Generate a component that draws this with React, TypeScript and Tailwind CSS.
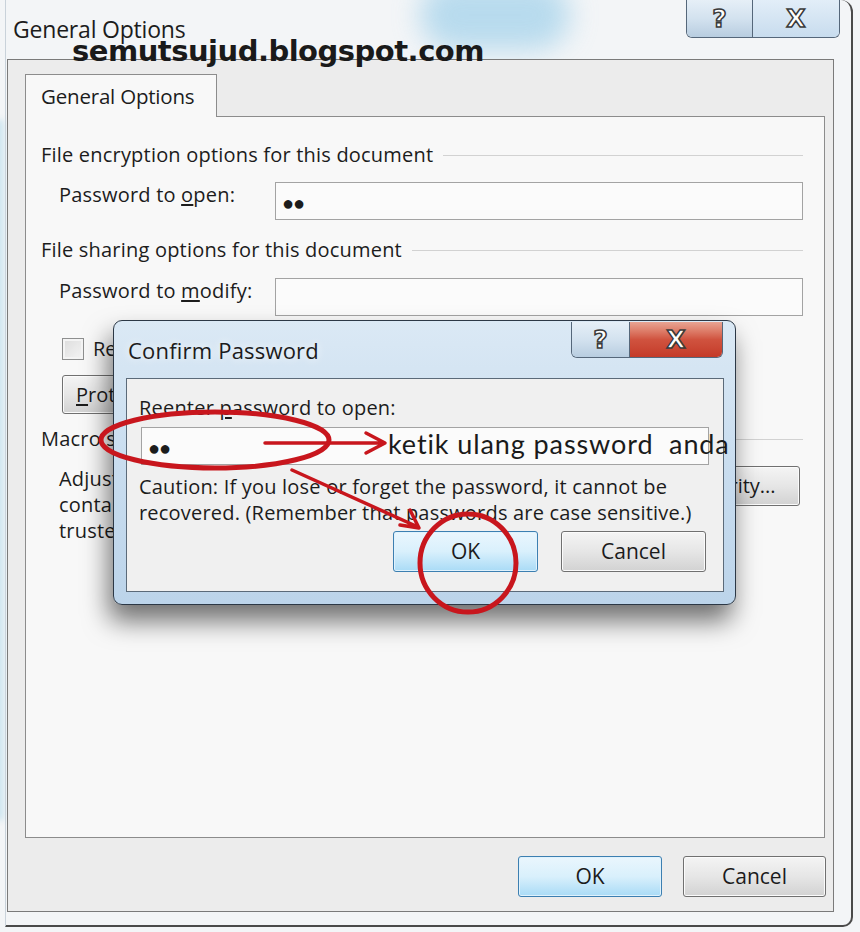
import React from 'react';

function WinButton({ label, primary, className = '' }: { label: React.ReactNode; primary?: boolean; className?: string }) {
  return (
    <div
      className={
        'flex items-center justify-center rounded-[3px] border text-[20px] leading-none text-[#1b1b1b] ' +
        (primary
          ? 'border-[#3c7fb1] bg-gradient-to-b from-[#eaf6fd] via-[#d9f0fc] to-[#a9dbf6] shadow-[inset_0_0_0_1px_#dff2fd]'
          : 'border-[#707070] bg-gradient-to-b from-[#f4f4f4] via-[#e6e6e6] to-[#d2d2d2] shadow-[inset_0_0_0_1px_#fbfbfb]') +
        ' ' +
        className
      }
    >
      {label}
    </div>
  );
}

function SectionHeading({ text, className = '' }: { text: string; className?: string }) {
  return (
    <div className={'flex items-center pl-[15px] pr-[21px] ' + className}>
      <span className="whitespace-nowrap text-[20px] leading-[24px] tracking-[0.2px]">{text}</span>
      <div className="ml-[10px] h-px flex-1 bg-[#d2d2d2]" />
    </div>
  );
}

function PasswordRow({ label, dots, className = '' }: { label: React.ReactNode; dots?: boolean; className?: string }) {
  return (
    <div className={'flex items-start pl-[33px] ' + className}>
      <div className="mt-px w-[216px] text-[20px] leading-[24px] tracking-[0.2px]">{label}</div>
      <div className="flex h-[38px] w-[528px] items-center border border-[#a3a3a3] bg-[#fbfbfb] pl-[6px] pt-[3px] text-[20px] tracking-[-1px]">
        {dots ? '●●' : ''}
      </div>
    </div>
  );
}

function TitleButtons({ red, helpW, closeW, h }: { red?: boolean; helpW: string; closeW: string; h: string }) {
  const glyph = 'font-["DejaVu_Sans",sans-serif] font-bold leading-none text-white [-webkit-text-stroke:1.5px_#3a3a3a]';
  return (
    <div className={'flex overflow-hidden rounded-b-[6px] border border-t-0 border-[#55677a] ' + h}>
      <div className={'flex items-center justify-center bg-gradient-to-b from-[#e6eff7] via-[#d3e2ef] to-[#b8cde0] ' + helpW}>
        <span className={glyph + ' text-[25px]'}>?</span>
      </div>
      <div
        className={
          'flex items-center justify-center border-l border-[#55677a] ' +
          (red ? 'bg-gradient-to-b from-[#e8a493] via-[#d0533f] to-[#c43a28] ' : 'bg-gradient-to-b from-[#e2eef8] to-[#c8dcee] ') +
          closeW
        }
      >
        <span className={glyph + ' text-[25px]'}>X</span>
      </div>
    </div>
  );
}

export default function App() {
  return (
    <div className="relative h-[932px] w-[860px] overflow-hidden bg-[#f3f5f7] font-['Open_Sans',sans-serif] text-[#1c1c1c]">
      {/* blurred desktop behind the glass */}
      <div className="absolute left-[420px] top-[-20px] h-[70px] w-[150px] rounded-full bg-[#9fd0ea] opacity-70 blur-[14px]" />
      <div className="absolute left-[-6px] top-[120px] h-[700px] w-[10px] bg-[#cfe6f0] blur-[3px]" />

      <div className="relative ml-[5px] flex h-[927px] w-[848px] flex-col rounded-br-[10px] rounded-tr-[12px] border-b-2 border-l border-r-2 border-b-[#4a4a4a] border-l-[#c9d2da] border-r-[#4a4a4a]">
        {/* title bar */}
        <div className="flex h-[59px] items-start justify-between">
          <div className="ml-[7px] mt-[15px] text-[23px] leading-[28px] tracking-[-0.2px]">General Options</div>
          <div className="mr-[11px]">
            <TitleButtons helpW="w-[65px]" closeW="w-[87px]" h="h-[38px]" />
          </div>
        </div>

        {/* client frame */}
        <div className="ml-px flex h-[853px] w-[827px] flex-col border border-[#7a7a7a] bg-[#ececec]">
          <div className="relative z-10 -mb-px ml-[17px] mt-[14px] h-[43px] w-[192px] border border-b-0 border-[#8c8c8c] bg-[#f8f8f8] pl-[15px] pt-[8px] text-[20.5px] leading-[26px] tracking-[-0.2px]">
            General Options
          </div>
          <div className="ml-[17px] h-[722px] w-[800px] border border-[#8c8c8c] bg-[#f8f8f8] pt-[26px]">
            <SectionHeading text="File encryption options for this document" />
            <PasswordRow
              className="mt-[15px]"
              dots
              label={
                <>
                  Password to <span className="underline underline-offset-2">o</span>pen:
                </>
              }
            />
            <SectionHeading text="File sharing options for this document" className="mt-[18px]" />
            <PasswordRow
              className="mt-[16px]"
              label={
                <>
                  Password to <span className="underline underline-offset-2">m</span>odify:
                </>
              }
            />
            <div className="ml-[36px] mt-[21px] flex items-center gap-[9px]">
              <div className="h-[22px] w-[22px] border border-[#8e8f8f] bg-gradient-to-br from-[#dcdcdc] to-[#f5f5f5] shadow-[inset_0_0_0_2px_#f4f4f4]" />
              <span className="text-[20px] leading-[24px]">Read-only recommended</span>
            </div>
            <WinButton
              className="ml-[36px] mt-[14px] h-[39px] w-[210px] justify-start pl-[13px]"
              label={
                <span>
                  <span className="underline underline-offset-2">P</span>rotect Document...
                </span>
              }
            />
            <SectionHeading text="Macro security" className="mt-[13px]" />
            <div className="mt-[15px] flex items-start pl-[33px] pr-[24px]">
              <p className="w-[540px] text-[20px] leading-[26px] tracking-[0.2px]">
                Adjust the security level for opening files that might
                <br />
                contain macro viruses, and specify the names of
                <br />
                trusted macro developers.
              </p>
              <WinButton className="ml-auto h-[40px] w-[185px] pr-[18px]" label="Macro Security..." />
            </div>
          </div>
          <div className="mt-[18px] flex justify-end gap-[21px] pr-[7px]">
            <WinButton primary className="h-[41px] w-[144px] text-[21px]" label="OK" />
            <WinButton className="h-[41px] w-[143px] text-[21px]" label="Cancel" />
          </div>
        </div>
      </div>

      {/* Confirm Password dialog */}
      <div className="absolute left-[113px] top-[320px] flex h-[285px] w-[623px] flex-col rounded-[9px] border border-[#2c3846] bg-gradient-to-b from-[#dbe9f5] via-[#c9ddef] to-[#bcd4ea] shadow-[-4px_16px_26px_rgba(0,0,0,0.55)]">
        <div className="flex h-[57px] items-start justify-between">
          <div className="ml-[14px] mt-[15px] text-[22px] leading-[28px] tracking-[0.2px] [text-shadow:0_0_8px_#ffffff]">
            Confirm Password
          </div>
          <div className="mr-[12px] mt-px">
            <TitleButtons red helpW="w-[57px]" closeW="w-[93px]" h="h-[36px]" />
          </div>
        </div>
        <div className="ml-[12px] h-[214px] w-[598px] border border-[#5b6a79] bg-[#f0f0f0] pt-[17px]">
          <div className="pl-[12px] text-[20px] leading-[24px] tracking-[0.2px]">
            Reenter <span className="underline underline-offset-2">p</span>assword to open:
          </div>
          <div className="ml-[14px] mt-[7px] flex h-[38px] w-[568px] items-center border border-[#a3a3a3] bg-[#fbfbfb] pl-[6px] pt-[3px] text-[20px] tracking-[-1px]">
            ●●
          </div>
          <p className="mt-[9px] pl-[12px] text-[20px] leading-[26px] tracking-[0.2px]">
            Caution: If you lose or forget the password, it cannot be
            <br />
            recovered. (Remember that passwords are case sensitive.)
          </p>
          <div className="ml-[266px] mt-[5px] flex gap-[23px]">
            <WinButton primary className="h-[41px] w-[145px] text-[21px]" label="OK" />
            <WinButton className="h-[41px] w-[145px] text-[21px]" label="Cancel" />
          </div>
        </div>
      </div>

      {/* watermark */}
      <div className="absolute left-[72px] top-[33px] font-['DejaVu_Sans',sans-serif] text-[29px] font-bold leading-[36px] tracking-[-0.5px] text-[#1a1a1a]">
        semutsujud.blogspot.com
      </div>

      {/* annotations */}
      <svg className="pointer-events-none absolute left-0 top-0" width="860" height="932" viewBox="0 0 860 932">
        <ellipse cx="215" cy="440" rx="114" ry="28" fill="none" stroke="#c8161d" strokeWidth="5" />
        <path d="M265 443 H384 M366 433 L385 443 L366 453" fill="none" stroke="#c8161d" strokeWidth="3.5" strokeLinecap="round" strokeLinejoin="round" />
        <path d="M292 470 L418 527 M400 525 L419 528 L410 510" fill="none" stroke="#c8161d" strokeWidth="3.5" strokeLinecap="round" strokeLinejoin="round" />
        <ellipse cx="468" cy="563" rx="48" ry="49" fill="none" stroke="#c8161d" strokeWidth="5" />
      </svg>
      <div className="absolute left-[388px] top-[426px] whitespace-pre font-['Lato',sans-serif] text-[27px] leading-[36px] tracking-[0.9px] text-[#1a1a1a]">
        ketik ulang password  anda
      </div>
    </div>
  );
}
